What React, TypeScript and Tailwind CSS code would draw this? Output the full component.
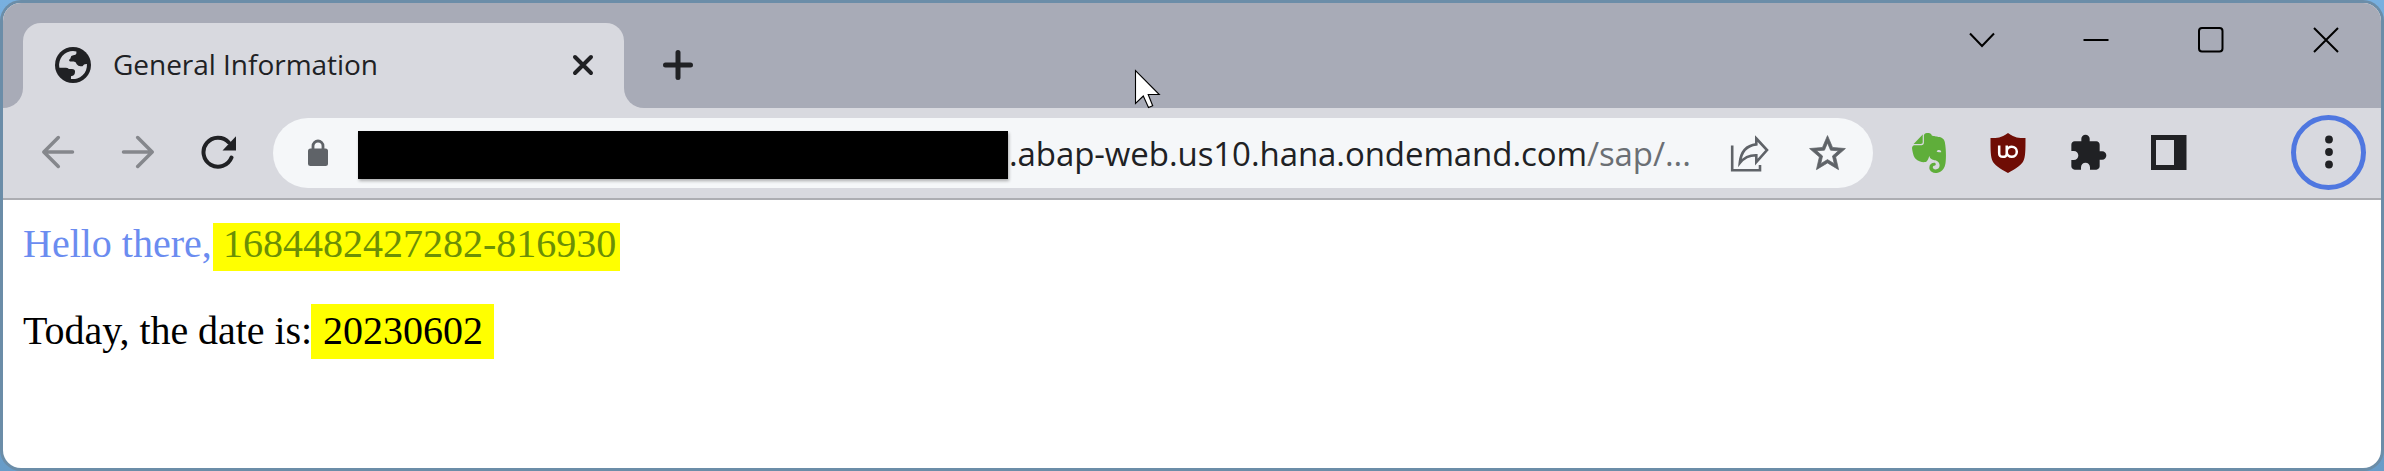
import type { ReactNode } from "react";
import { SiEvernote, SiUblockorigin } from "react-icons/si";
import { MdExtension } from "react-icons/md";

function IconButton({ label, className, children }: { label: string; className: string; children: ReactNode }) {
  return (
    <button aria-label={label} className={`flex shrink-0 items-center justify-center ${className}`}>
      {children}
    </button>
  );
}

function Globe() {
  return (
    <svg width="36" height="36" viewBox="166 142 106 106" className="shrink-0">
      <circle cx="219" cy="195" r="53" fill="#202124" />
      <path
        fill="#d8d9df"
        d="M178 193A41 41 0 0 1 229 155V161Q228 166 220 166Q212 167 212 174Q212 178 208 179Q206 185 211 185H221Q228 186 230 193Q234 199 241 199H247Q251 191 260 192A41 41 0 0 1 213 236V228Q225 227 225 215Q225 207 216 207H207Q203 203 198 203H179Q178 198 178 193Z"
      />
    </svg>
  );
}

function Tab() {
  return (
    <div className="flex h-[105px] items-end">
      <div className="h-[85px] w-5 bg-[#d8d9df]">
        <div className="h-full w-full rounded-br-[20px] bg-[#a8abb7]" />
      </div>
      <div className="flex h-[85px] w-[601px] items-center rounded-t-[18px] bg-[#d8d9df] pb-[2px] pl-8">
        <Globe />
        <span className="ml-[22px] w-[458px] pb-[2px] text-[28px] leading-none tracking-[-0.03px] text-[#202124]">
          General Information
        </span>
        <IconButton label="Close tab" className="h-6 w-6">
          <svg width="24" height="24" fill="none" stroke="#202124" strokeWidth="4" strokeLinecap="round">
            <path d="M4 4L20 20M20 4L4 20" />
          </svg>
        </IconButton>
      </div>
      <div className="h-[85px] w-5 bg-[#d8d9df]">
        <div className="h-full w-full rounded-bl-[20px] bg-[#a8abb7]" />
      </div>
      <IconButton label="New tab" className="ml-[18px] h-[84px] w-8 pb-[2px]">
        <svg width="32" height="32" fill="none" stroke="#202124" strokeWidth="5" strokeLinecap="round">
          <path d="M16 3.5V28.5M3.5 16H28.5" />
        </svg>
      </IconButton>
    </div>
  );
}

function WindowControls() {
  return (
    <div className="mr-[41px] flex h-[73px] items-center gap-[87px] text-black">
      <IconButton label="Search tabs" className="h-7 w-7">
        <svg width="28" height="28" fill="none" stroke="currentColor" strokeWidth="2">
          <path d="M3 7.5L15 20L27 7.5" />
        </svg>
      </IconButton>
      <IconButton label="Minimize" className="h-7 w-7">
        <svg width="28" height="28" fill="none" stroke="currentColor" strokeWidth="2">
          <path d="M1.5 14H26.5" />
        </svg>
      </IconButton>
      <IconButton label="Maximize" className="h-7 w-7">
        <svg width="28" height="28" fill="none" stroke="currentColor" strokeWidth="2">
          <rect x="2" y="2" width="23.5" height="23.5" rx="3" />
        </svg>
      </IconButton>
      <IconButton label="Close" className="h-7 w-7">
        <svg width="28" height="28" fill="none" stroke="currentColor" strokeWidth="2">
          <path d="M2 2L26 26M26 2L2 26" />
        </svg>
      </IconButton>
    </div>
  );
}

function Omnibox() {
  return (
    <div className="flex h-[70px] w-[1600px] shrink-0 items-center rounded-full bg-[#f5f7f9]">
      <svg width="20" height="28" className="ml-[35px] shrink-0">
        <rect x="0" y="9.5" width="20" height="17.5" rx="2.5" fill="#5f6368" />
        <path d="M5 10V7a5 5 0 0 1 10 0V10" fill="none" stroke="#5f6368" strokeWidth="2.8" />
      </svg>
      <div className="mt-[3px] ml-[30px] h-12 w-[650px] shrink-0 bg-black shadow-[1px_2px_3px_0px_rgba(0,0,0,0.3)]" />
      <div className="ml-px w-[720px] shrink-0 text-[33px] leading-none tracking-[-0.08px] whitespace-nowrap text-[#202124]">
        .abap-web.us10.hana.ondemand.com<span className="text-[#6b6f74]">/sap/...</span>
      </div>
      <IconButton label="Share" className="h-10 w-10 pb-[3px]">
        <svg width="40" height="40" className="shrink-0" fill="none" stroke="#5f6368" strokeWidth="2.6">
          <path d="M3.2 13.5V38.3H31V33" />
          <path d="M27.3 6.5L38 18L27.3 30V23.2Q17 23 10.8 31Q12.5 14 27.3 12.4Z" />
        </svg>
      </IconButton>
      <IconButton label="Bookmark this tab" className="ml-9 h-11 w-11">
        <svg width="43" height="43" viewBox="0 0 24 24" fill="#5f6368" stroke="#5f6368" strokeWidth="0.4">
          <path d="M22 9.24l-7.19-.62L12 2 9.19 8.63 2 9.24l5.46 4.73L5.82 21 12 17.27 18.18 21l-1.63-7.03L22 9.24zM12 15.4l-3.76 2.27 1-4.28-3.32-2.88 4.38-.38L12 6.1l1.71 4.04 4.38.38-3.32 2.88 1 4.28L12 15.4z" />
        </svg>
      </IconButton>
    </div>
  );
}

function Toolbar() {
  return (
    <div className="flex h-[92px] shrink-0 items-center border-b-2 border-[#acadb2] bg-[#d8d9df]">
      <IconButton label="Back" className="ml-[38px] h-9 w-9">
        <svg width="36" height="36" fill="none" stroke="#85878c" strokeWidth="3.5" strokeLinecap="round" strokeLinejoin="round">
          <path d="M17.3 2.5L2.8 17L17.3 31.5M3 17H31.5" />
        </svg>
      </IconButton>
      <IconButton label="Forward" className="ml-[41px] h-9 w-9">
        <svg width="36" height="36" fill="none" stroke="#85878c" strokeWidth="3.5" strokeLinecap="round" strokeLinejoin="round">
          <path d="M19.7 2.5L34.2 17L19.7 31.5M34 17H5.5" />
        </svg>
      </IconButton>
      <IconButton label="Reload" className="ml-[47px] h-9 w-9">
        <svg width="36" height="36">
          <path d="M30.5 22.5A14.5 14.5 0 1 1 27.8 7.5" fill="none" stroke="#202124" strokeWidth="4" strokeLinecap="round" />
          <path d="M35 1.2V15.5H21.5Z" fill="#202124" />
        </svg>
      </IconButton>
      <div className="ml-9 flex">
        <Omnibox />
      </div>
      <IconButton label="Evernote Web Clipper" className="ml-9 h-10 w-10">
        <SiEvernote size={40} color="#5fae3a" />
      </IconButton>
      <IconButton label="uBlock Origin" className="ml-[39px] h-10 w-10">
        <span className="flex h-[26px] w-[24px] items-center justify-center bg-white">
          <SiUblockorigin size={40} color="#6f0d05" className="shrink-0" />
        </span>
      </IconButton>
      <IconButton label="Extensions" className="ml-10 h-10 w-10">
        <MdExtension size={40} color="#202124" />
      </IconButton>
      <IconButton label="Side panel" className="ml-[43px] h-9 w-9">
        <svg width="36" height="36">
          <path fill="#202124" fillRule="evenodd" d="M0 0H35.5V35H0ZM5 5V30H23V5Z" />
        </svg>
      </IconButton>
      <IconButton label="Menu" className="mb-[2px] ml-[104px] h-[75px] w-[75px] rounded-full border-[5px] border-[#4f77e0]">
        <svg width="10" height="36" fill="#202124">
          <circle cx="5" cy="5.5" r="3.9" />
          <circle cx="5" cy="18" r="3.9" />
          <circle cx="5" cy="30.5" r="3.9" />
        </svg>
      </IconButton>
    </div>
  );
}

function Cursor() {
  return (
    <svg width="28" height="42" className="absolute top-[68px] left-[1133px]">
      <path d="M2.5 2.5V35.5L10.3 28L15.5 39.5L19.7 37.7L15.2 26.5H26.3Z" fill="#fff" stroke="#000" strokeWidth="1.1" />
    </svg>
  );
}

export default function App() {
  return (
    <div className="relative flex h-[471px] w-[2384px] overflow-hidden bg-linear-to-b from-[#78b0e0] to-[#689cc8] p-[3px] font-['Open_Sans',sans-serif]">
      <div className="flex flex-1 flex-col overflow-hidden rounded-[18px] bg-white shadow-[0_0_0_3px_#6b8da8]">
        <header className="flex h-[105px] shrink-0 items-start justify-between bg-[#a8abb7]">
          <Tab />
          <WindowControls />
        </header>
        <Toolbar />
        <main className="flex flex-col items-start pl-5 font-['Liberation_Serif',serif] text-[40px] leading-[46px] whitespace-pre">
          <p className="mt-[21px] flex h-[50px] text-[#6b8cf0]">
            <span className="w-[190px]">Hello there,</span>
            <span className="mt-[2px] h-12 w-[407px] bg-[#ffff00] leading-[42px] text-[#6b8f06]"> 1684482427282-816930</span>
          </p>
          <p className="mt-[37px] flex text-black">
            <span className="w-[288px] tracking-[-0.05px]">Today, the date is:</span>
            <span className="mt-[-4px] h-[55px] w-[183px] bg-[#ffff00] pl-[2px] leading-[54px]"> 20230602</span>
          </p>
        </main>
      </div>
      <Cursor />
    </div>
  );
}
